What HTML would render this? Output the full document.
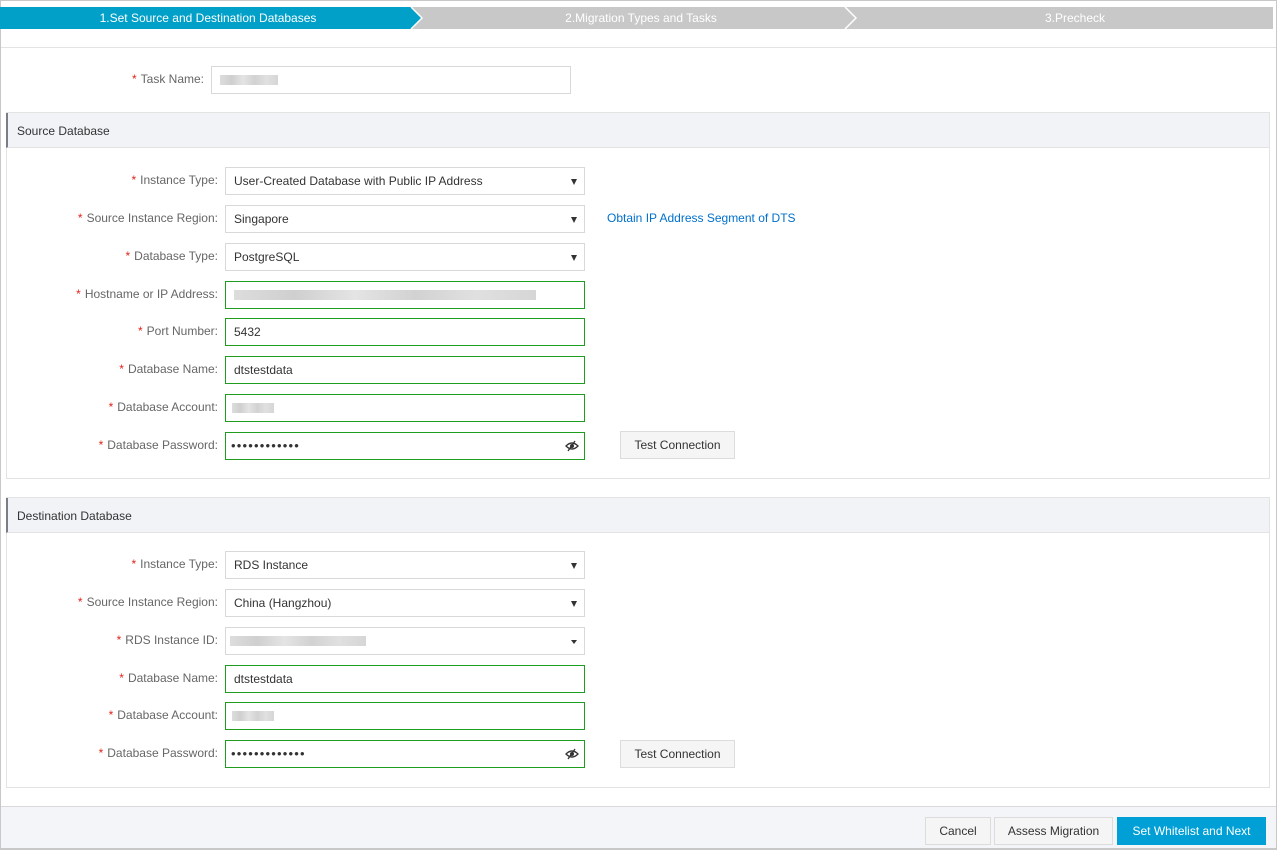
<!DOCTYPE html>
<html><head><meta charset="utf-8">
<style>
*{box-sizing:border-box;margin:0;padding:0}
body{width:1278px;height:850px;background:#fff;font-family:"Liberation Sans",Tahoma,sans-serif;font-size:12px;color:#333;position:relative;overflow:hidden}
.frame{position:absolute;left:0;top:0;width:1277px;height:850px;border:1px solid #c8c8c8;border-bottom:2px solid #c8c8c8}
.abs{position:absolute}
.lbl{position:absolute;right:1060px;color:#666;white-space:nowrap;font-size:12px;line-height:14px}
.lbl b{color:#e2231a;font-weight:normal;margin-right:4px}
.inp{position:absolute;left:225px;width:360px;height:28px;border:1px solid #d9d9d9;background:#fff;line-height:26px;padding-left:8px;color:#333}
.ok{border-color:#1e9e1e}
.sel:after{content:"";position:absolute;right:7px;top:11px;border-left:3px solid transparent;border-right:3px solid transparent;border-top:6px solid #333}
.sm:after{top:12px;border-top:4px solid #333}
.blur{position:absolute;top:8px;height:10px;background:linear-gradient(90deg,#ddd,#cfcfcf 20%,#e4e4e4 40%,#d2d2d2 60%,#e0e0e0 80%,#d6d6d6)}
.sec{position:absolute;left:6px;width:1264px;border:1px solid #e3e3e3}
.sechd{height:35px;background:#f2f3f7;border-left:2px solid #7a7d88;border-bottom:1px solid #e3e3e3;line-height:37px;padding-left:9px;color:#333;margin-left:-1px}
.btn{position:absolute;height:28px;border:1px solid #dcdcdc;background:#f5f5f5;text-align:center;line-height:26px;color:#333}
.dots{letter-spacing:1.2px;font-size:13px}
</style></head><body>
<div class="frame"></div>
<svg class="abs" style="left:0;top:7px" width="1273" height="22">
<rect x="0" y="0" width="1273" height="22" fill="#c8c8c8"/>
<polygon points="0,0 411,0 422,11 411,22 0,22" fill="#00a0c8"/>
<polyline points="411,0 422,11 411,22" fill="none" stroke="#fff" stroke-width="1.5"/>
<polyline points="845,0 856,11 845,22" fill="none" stroke="#fff" stroke-width="1.5"/>
<text x="208" y="15" fill="#fff" font-size="12" text-anchor="middle" font-family="Liberation Sans,sans-serif">1.Set Source and Destination Databases</text>
<text x="641" y="15" fill="#fff" font-size="12" text-anchor="middle" font-family="Liberation Sans,sans-serif">2.Migration Types and Tasks</text>
<text x="1075" y="15" fill="#fff" font-size="12" text-anchor="middle" font-family="Liberation Sans,sans-serif">3.Precheck</text>
</svg>
<div class="abs" style="left:1px;top:47px;width:1275px;height:1px;background:#e3e3e3"></div>

<div class="lbl" style="right:1074px;top:72px"><b>*</b>Task Name:</div>
<div class="inp" style="left:211px;top:66px;width:360px;height:28px"><div class="blur" style="left:8px;width:58px"></div></div>

<div class="sec" style="top:112px;height:367px"><div class="sechd">Source Database</div></div>
<div class="lbl" style="top:173px"><b>*</b>Instance Type:</div>
<div class="inp sel" style="top:167px">User-Created Database with Public IP Address</div>
<div class="lbl" style="top:211px"><b>*</b>Source Instance Region:</div>
<div class="inp sel" style="top:205px">Singapore</div>
<div class="abs" style="left:607px;top:211px;color:#0070cc;line-height:14px">Obtain IP Address Segment of DTS</div>
<div class="lbl" style="top:249px"><b>*</b>Database Type:</div>
<div class="inp sel" style="top:243px">PostgreSQL</div>
<div class="lbl" style="top:287px"><b>*</b>Hostname or IP Address:</div>
<div class="inp ok" style="top:281px"><div class="blur" style="left:8px;width:302px"></div></div>
<div class="lbl" style="top:324px"><b>*</b>Port Number:</div>
<div class="inp ok" style="top:318px">5432</div>
<div class="lbl" style="top:362px"><b>*</b>Database Name:</div>
<div class="inp ok" style="top:356px">dtstestdata</div>
<div class="lbl" style="top:400px"><b>*</b>Database Account:</div>
<div class="inp ok" style="top:394px"><div class="blur" style="left:6px;width:42px"></div></div>
<div class="lbl" style="top:438px"><b>*</b>Database Password:</div>
<div class="inp ok" style="top:432px;padding-left:5px"><span class="dots">••••••••••••</span>
<svg class="abs" style="right:5px;top:7px" width="14" height="12" viewBox="0 0 14 12"><path d="M1 6 Q7 0 13 6 Q7 12 1 6Z" fill="none" stroke="#333" stroke-width="1.3"/><circle cx="7" cy="6" r="2" fill="#333"/><line x1="3" y1="11" x2="10" y2="1" stroke="#333" stroke-width="1.3"/></svg></div>
<div class="btn" style="left:620px;top:431px;width:115px">Test Connection</div>

<div class="sec" style="top:497px;height:291px"><div class="sechd">Destination Database</div></div>
<div class="lbl" style="top:557px"><b>*</b>Instance Type:</div>
<div class="inp sel" style="top:551px">RDS Instance</div>
<div class="lbl" style="top:595px"><b>*</b>Source Instance Region:</div>
<div class="inp sel" style="top:589px">China (Hangzhou)</div>
<div class="lbl" style="top:633px"><b>*</b>RDS Instance ID:</div>
<div class="inp sel sm" style="top:627px"><div class="blur" style="left:4px;width:136px"></div></div>
<div class="lbl" style="top:671px"><b>*</b>Database Name:</div>
<div class="inp ok" style="top:665px">dtstestdata</div>
<div class="lbl" style="top:708px"><b>*</b>Database Account:</div>
<div class="inp ok" style="top:702px"><div class="blur" style="left:6px;width:42px"></div></div>
<div class="lbl" style="top:746px"><b>*</b>Database Password:</div>
<div class="inp ok" style="top:740px;padding-left:5px"><span class="dots">•••••••••••••</span>
<svg class="abs" style="right:5px;top:7px" width="14" height="12" viewBox="0 0 14 12"><path d="M1 6 Q7 0 13 6 Q7 12 1 6Z" fill="none" stroke="#333" stroke-width="1.3"/><circle cx="7" cy="6" r="2" fill="#333"/><line x1="3" y1="11" x2="10" y2="1" stroke="#333" stroke-width="1.3"/></svg></div>
<div class="btn" style="left:620px;top:740px;width:115px">Test Connection</div>

<div class="abs" style="left:1px;top:806px;width:1275px;height:42px;background:#f4f5f8;border-top:1px solid #d9d9d9"></div>
<div class="btn" style="left:925px;top:817px;width:66px">Cancel</div>
<div class="btn" style="left:994px;top:817px;width:119px">Assess Migration</div>
<div class="btn" style="left:1117px;top:817px;width:149px;background:#00a0d6;border-color:#00a0d6;color:#fff">Set Whitelist and Next</div>
</body></html>
